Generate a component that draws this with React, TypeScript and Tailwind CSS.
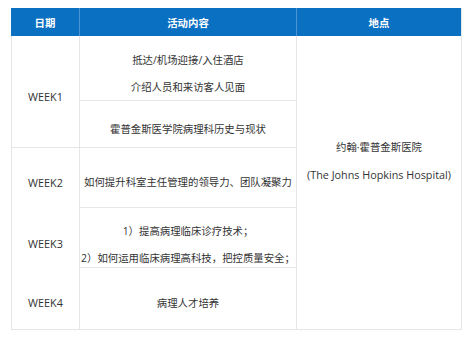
import React from "react";

const font = { fontFamily: '"Open Sans", "Noto Sans CJK SC", sans-serif' };

export default function App() {
  const cell = "flex flex-col items-center justify-center text-center";
  return (
    <div className="w-[466px] h-[337px] bg-white pl-[11px] pt-[8px]" style={font}>
      <div className="w-[451px] border-r border-b border-[#e6e6e6] grid grid-cols-[68px_217px_165px] grid-rows-[28px_65px_47px_60px_60px_61px] text-[10.4px] text-[#333]">
        {/* header */}
        <div className="col-start-1 row-start-1 bg-[#0a70c2] text-white font-bold flex items-center justify-center pt-[4px]">日期</div>
        <div className="col-start-2 row-start-1 bg-[#0a70c2] border-l border-[#4d93d3] text-white font-bold flex items-center justify-center pt-[4px]">活动内容</div>
        <div className="col-start-3 row-start-1 bg-[#0a70c2] border-l border-[#4d93d3] text-white font-bold flex items-center justify-center pt-[4px]">地点</div>

        {/* column 1 */}
        <div className={`col-start-1 row-start-2 row-span-2 border-l border-b border-[#e6e6e6] pt-[12px] text-[10.8px] ${cell}`}>WEEK1</div>
        <div className={`col-start-1 row-start-4 border-l border-[#e6e6e6] pt-[10px] text-[10.8px] ${cell}`}>WEEK2</div>
        <div className={`col-start-1 row-start-5 border-l border-[#e6e6e6] pt-[12px] text-[10.8px] ${cell}`}>WEEK3</div>
        <div className={`col-start-1 row-start-6 border-l border-[#e6e6e6] pt-[10px] text-[10.8px] ${cell}`}>WEEK4</div>

        {/* column 2 */}
        <div className={`col-start-2 row-start-2 border-l border-b border-[#e6e6e6] pt-[12px] leading-[27px] ${cell}`}>
          <p>抵达/机场迎接/入住酒店</p>
          <p>介绍人员和来访客人见面</p>
        </div>
        <div className={`col-start-2 row-start-3 border-l border-b border-[#e6e6e6] pt-[11px] ${cell}`}>
          <p>霍普金斯医学院病理科历史与现状</p>
        </div>
        <div className={`col-start-2 row-start-4 border-l border-b border-[#e6e6e6] pt-[10px] ${cell}`}>
          <p>如何提升科室主任管理的领导力、团队凝聚力</p>
        </div>
        <div className={`col-start-2 row-start-5 border-l border-b border-[#e6e6e6] pt-[14px] leading-[27px] ${cell}`}>
          <p>1）提高病理临床诊疗技术；</p>
          <p>2）如何运用临床病理高科技，把控质量安全；</p>
        </div>
        <div className={`col-start-2 row-start-6 border-l border-[#e6e6e6] pt-[10px] ${cell}`}>
          <p>病理人才培养</p>
        </div>

        {/* column 3 */}
        <div className="col-start-3 row-start-2 row-span-5 border-l border-[#e6e6e6] flex flex-col items-center justify-start text-center pt-[97px] leading-[28px]">
          <p>约翰·霍普金斯医院</p>
          <p className="text-[10.8px]">(The Johns Hopkins Hospital)</p>
        </div>
      </div>
    </div>
  );
}
